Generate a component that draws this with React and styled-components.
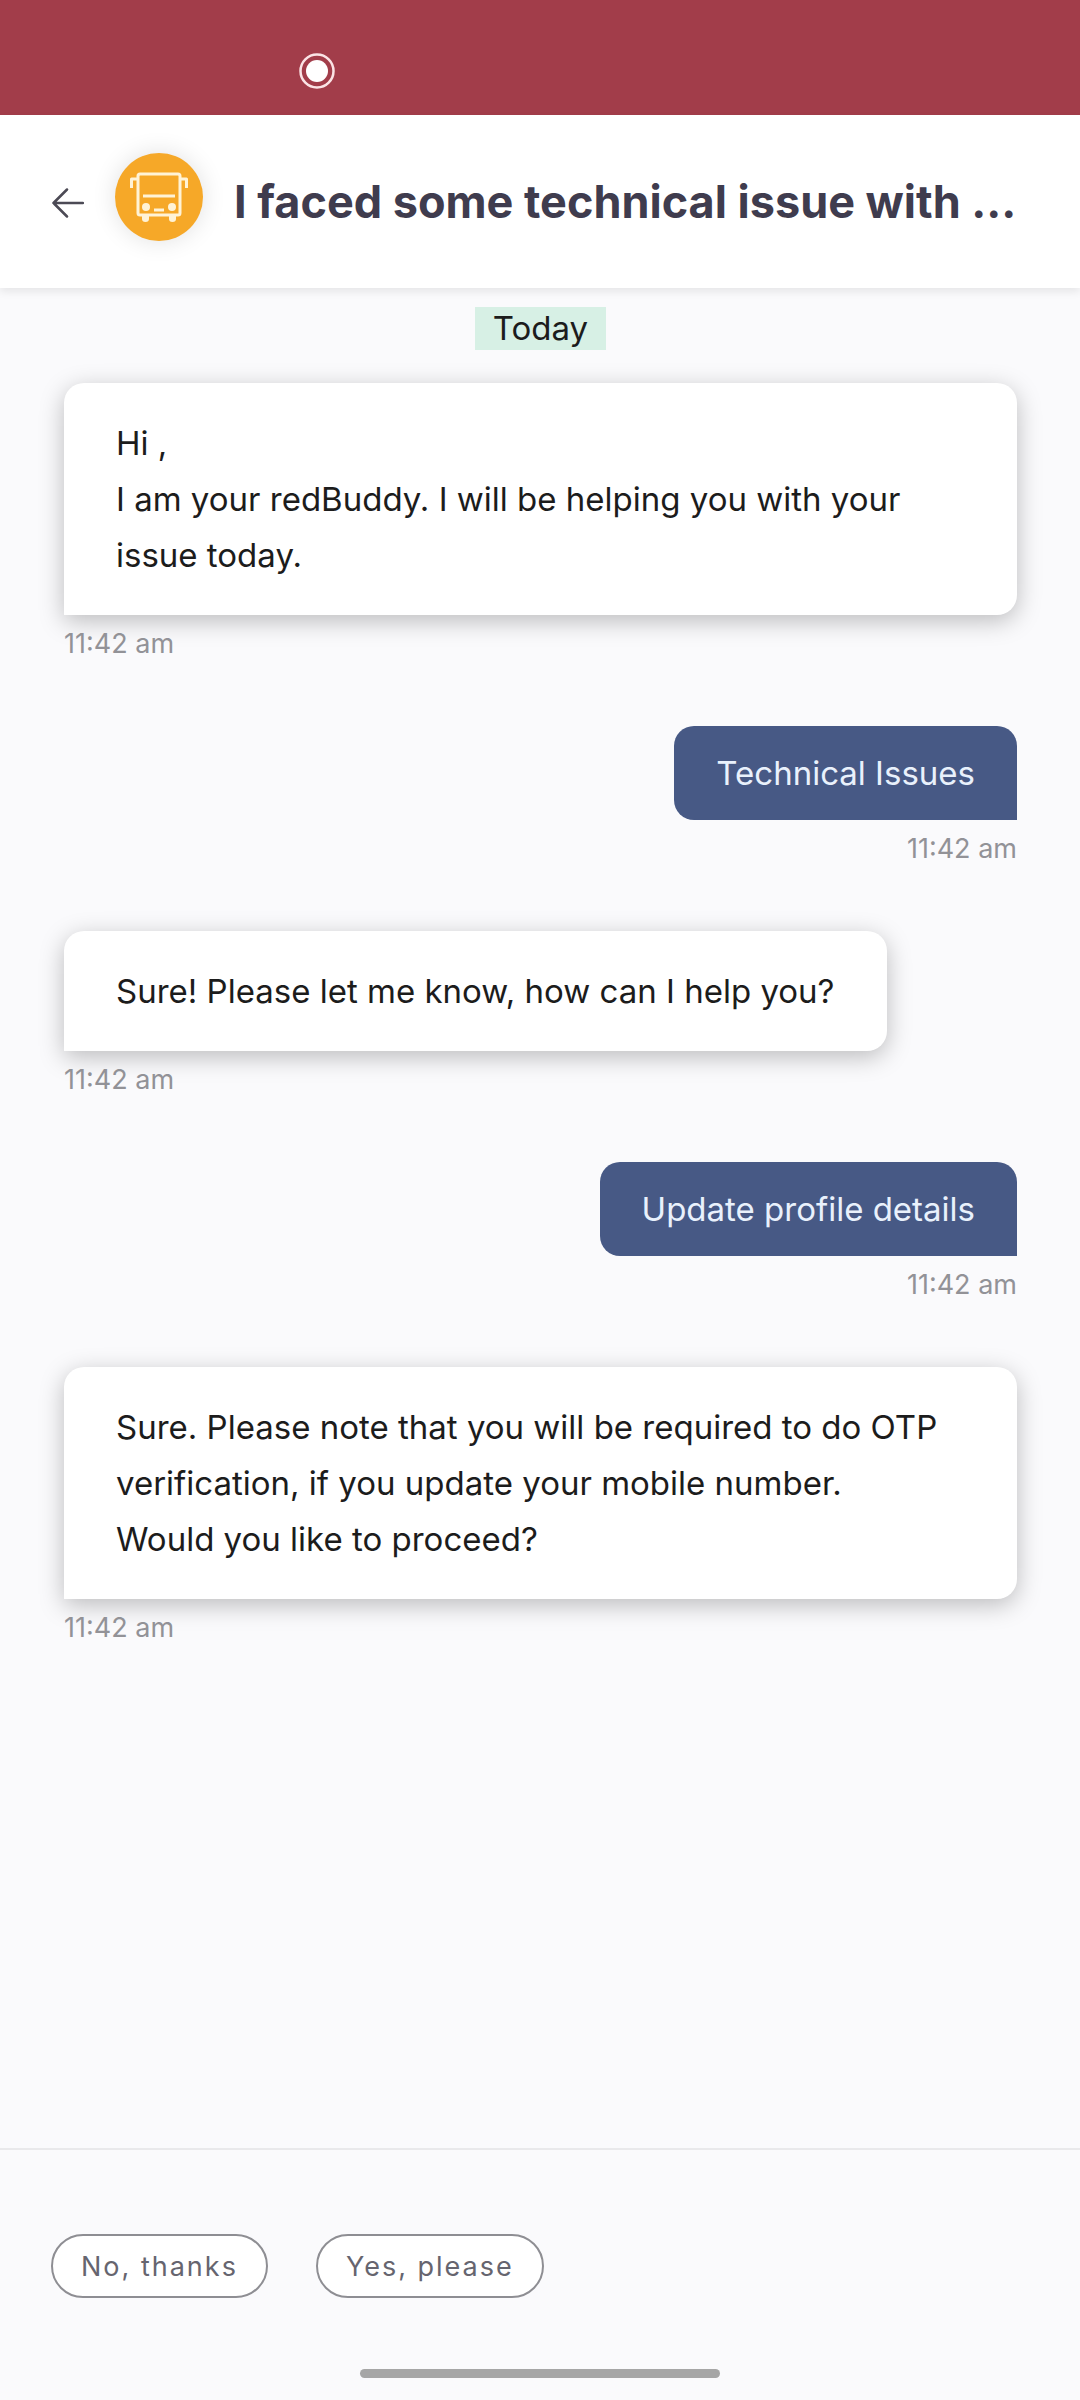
import React from 'react'
import styled, { createGlobalStyle } from 'styled-components'

const messages = [
    { id: 1, from: "bot", text: "Hi ,\nI am your redBuddy. I will be helping you with your issue today.", time: "11:42 am" },
    { id: 2, from: "user", text: "Technical Issues", time: "11:42 am" },
    { id: 3, from: "bot", text: "Sure! Please let me know, how can I help you?", time: "11:42 am" },
    { id: 4, from: "user", text: "Update profile details", time: "11:42 am" },
    { id: 5, from: "bot", text: "Sure. Please note that you will be required to do OTP verification, if you update your mobile number.\nWould you like to proceed?", time: "11:42 am" },
]

const replies = ["No, thanks", "Yes, please"]

export default function App() {
    return (
        <>
            <GlobalStyle />
            <Page>
                <StatusBar>
                    <RecordIcon viewBox="0 0 36 36" aria-hidden="true">
                        <circle cx="18" cy="18" r="16.5" fill="none" stroke="#fbe3e5" strokeWidth="2.5" />
                        <circle cx="18" cy="18" r="11" fill="#fff" />
                    </RecordIcon>
                </StatusBar>
                <Header>
                    <BackButton type="button" aria-label="Back">
                        <ArrowIcon viewBox="0 0 32 30">
                            <path d="M31 15H1.500M15 1.500L1.500 15L15 28.500" />
                        </ArrowIcon>
                    </BackButton>
                    <Avatar>
                        <BusIcon viewBox="0 0 60 52">
                            <rect x="9" y="3" width="42" height="41" rx="2" />
                            <path d="M9 8H2.500V17M51 8H57.500V17" />
                            <path d="M14 25H46" />
                            <path d="M25 39H35" />
                            <circle className="fill" cx="17" cy="36" r="4" />
                            <circle className="fill" cx="43" cy="36" r="4" />
                            <path className="fill" d="M13 44H20V48Q20 51 16.500 51T13 48ZM40 44H47V48Q47 51 43.500 51T40 48Z" />
                        </BusIcon>
                    </Avatar>
                    <Title>I faced some technical issue with ...</Title>
                </Header>
                <Chat>
                    <Day>Today</Day>
                    {messages.map((m) => (
                        <Message key={m.id} $from={m.from}>
                            <Bubble $from={m.from}>{m.text}</Bubble>
                            <Time>{m.time}</Time>
                        </Message>
                    ))}
                </Chat>
                <Footer>
                    <Replies>
                        {replies.map((r) => (
                            <Reply key={r} type="button">{r}</Reply>
                        ))}
                    </Replies>
                    <HomeBar />
                </Footer>
            </Page>
        </>
    )
}

const GlobalStyle = createGlobalStyle`
    * {
        box-sizing: border-box;
    }
    body {
        margin: 0;
        background: #fafafc;
        font-family: Inter, "Liberation Sans", sans-serif;
    }`
const Page = styled.div`
    display: flex;
    flex-direction: column;
    min-height: 100vh;`
const StatusBar = styled.div`
    display: flex;
    align-items: center;
    height: 115px;
    padding: 26px 299px 0;
    background: #a23d4a;`
const RecordIcon = styled.svg`
    width: 36px;
    height: 36px;`
const Header = styled.header`
    display: flex;
    align-items: center;
    height: 173px;
    padding: 0 52px;
    background: #fff;
    box-shadow: 0 4px 8px rgba(0, 0, 0, 0.08);`
const BackButton = styled.button`
    display: flex;
    padding: 2px 0 0;
    border: 0;
    background: none;`
const ArrowIcon = styled.svg`
    width: 32px;
    height: 30px;
    fill: none;
    stroke: #4c4a55;
    stroke-width: 2.5;
    stroke-linecap: round;
    stroke-linejoin: round;`
const Avatar = styled.div`
    display: flex;
    flex-shrink: 0;
    align-items: center;
    justify-content: center;
    width: 88px;
    height: 88px;
    margin: 0 31px 10px;
    border-radius: 50%;
    background: #f6a828;
    box-shadow: 0 0 24px rgba(0, 0, 0, 0.12);`
const BusIcon = styled.svg`
    width: 60px;
    height: 52px;
    fill: none;
    stroke: #fff3d6;
    stroke-width: 3;
    stroke-linejoin: round;
    .fill {
        fill: #fff3d6;
        stroke: none;
    }`
const Title = styled.h1`
    margin: 0;
    overflow: hidden;
    color: #3f3c4e;
    font-size: 45px;
    font-weight: 700;
    line-height: 56px;
    text-overflow: ellipsis;
    white-space: nowrap;`
const Chat = styled.main`
    display: flex;
    flex: 1;
    flex-direction: column;
    padding: 19px 63px 64px 64px;`
const Day = styled.div`
    align-self: center;
    margin-bottom: 33px;
    padding: 0 18px;
    background: #d7f0e5;
    color: #1c1c1c;
    font-size: 33px;
    line-height: 43px;`
const Message = styled.div`
    display: flex;
    flex-direction: column;
    align-items: ${({ $from }) => ($from === "user" ? "flex-end" : "flex-start")};
    margin-bottom: 64px;`
const Bubble = styled.div`
    padding: ${({ $from }) => ($from === "user" ? "19px 42px" : "32px 52px")};
    border-radius: ${({ $from }) => ($from === "user" ? "20px 20px 0 20px" : "20px 20px 20px 0")};
    background: ${({ $from }) => ($from === "user" ? "#475985" : "#fff")};
    box-shadow: ${({ $from }) => ($from === "user" ? "none" : "0 6px 24px rgba(0, 0, 0, 0.25)")};
    color: ${({ $from }) => ($from === "user" ? "#e9f1fc" : "#1c1c1c")};
    font-size: 33px;
    line-height: 56px;
    white-space: pre-line;`
const Time = styled.time`
    margin-top: 11px;
    color: #929297;
    font-size: 27px;
    line-height: 36px;`
const Footer = styled.footer`
    display: flex;
    flex-direction: column;
    border-top: 2px solid #e9e9eb;
    padding: 84px 51px 22px;`
const Replies = styled.div`
    display: flex;
    flex-wrap: wrap;
    gap: 48px;`
const Reply = styled.button`
    height: 64px;
    padding: 0 28px;
    border: 2px solid #8e8e93;
    border-radius: 32px;
    background: #fff;
    color: #66656f;
    font-family: inherit;
    font-size: 27px;
    letter-spacing: 2px;`
const HomeBar = styled.div`
    align-self: center;
    width: 360px;
    height: 9px;
    margin-top: 71px;
    border-radius: 5px;
    background: #a6a6a6;`
